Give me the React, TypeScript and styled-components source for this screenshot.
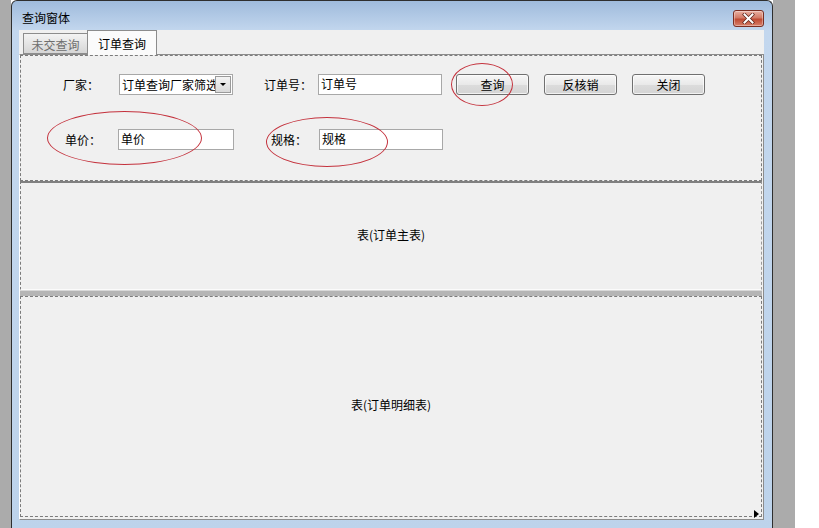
import React from "react";
import styled, { createGlobalStyle } from "styled-components";

// --- Global ---
const GlobalStyle = createGlobalStyle`
  html, body {
    margin: 0;
    padding: 0;
    background: #fff;
  }
  body {
    font-family: "Noto Sans CJK SC", "Liberation Sans", sans-serif;
    font-size: 12px;
    color: #000;
  }
  * {
    box-sizing: border-box;
  }
`;

// --- Desktop / window frame ---
const Desktop = styled.div`
  display: flex;
  width: 819px;
  height: 528px;
  overflow: hidden;
  background: #fff;
`;

const GrayStrip = styled.div<{ $w: number }>`
  width: ${(p) => p.$w}px;
  flex-shrink: 0;
  background: #ababab;
`;

const Window = styled.div`
  width: 762px;
  height: 540px;
  flex-shrink: 0;
  display: flex;
  flex-direction: column;
  border: 1px solid #2e2e2e;
  border-bottom: none;
  border-radius: 6px 6px 0 0;
  background: linear-gradient(#9fbbdc, #c3d7ee 30px, #bdd3eb);
  overflow: hidden;
`;

const TitleBar = styled.div`
  height: 29px;
  padding: 5px 8px 0 10px;
  display: flex;
  align-items: center;
  justify-content: space-between;
  flex-shrink: 0;
`;

const TitleText = styled.span`
  font-size: 12px;
  color: #000;
  line-height: 24px;
`;

const CloseButton = styled.div`
  width: 31px;
  height: 17px;
  border: 1px solid #7a2e22;
  border-radius: 3px;
  background: linear-gradient(#eab1a3, #d27a66 45%, #bf4a33 55%, #d8806a);
  display: flex;
  align-items: center;
  justify-content: center;
  box-shadow: inset 0 0 0 1px rgba(255, 255, 255, 0.35);
`;

const FrameBody = styled.div`
  flex: 1;
  padding: 0 8px 0 7px;
`;

const Client = styled.div`
  height: 490px;
  background: #f0f0f0;
  display: flex;
  flex-direction: column;
`;

// --- Tabs ---
const TabStrip = styled.div`
  height: 24px;
  padding-left: 4px;
  display: flex;
  align-items: flex-end;
  flex-shrink: 0;
`;

const Tab = styled.div<{ $active?: boolean }>`
  height: ${(p) => (p.$active ? 25 : 21)}px;
  width: ${(p) => (p.$active ? 70 : 64)}px;
  margin-bottom: ${(p) => (p.$active ? -1 : 0)}px;
  border: 1px solid #8c8c8c;
  border-bottom: ${(p) => (p.$active ? "none" : "1px solid #8c8c8c")};
  border-right: ${(p) => (p.$active ? "1px solid #8c8c8c" : "none")};
  background: ${(p) =>
    p.$active ? "#fbfbfb" : "linear-gradient(#f3f3f3, #d6d6d6)"};
  color: ${(p) => (p.$active ? "#000" : "#6e6e6e")};
  font-size: 12px;
  display: flex;
  align-items: center;
  justify-content: center;
  padding-top: ${(p) => (p.$active ? 0 : 2)}px;
  position: relative;
  z-index: 1;
`;

const TabPage = styled.div`
  flex: 1;
  display: flex;
  flex-direction: column;
  border-top: 1px solid #8c8c8c;
  border-right: 1px solid #8c8c8c;
  border-bottom: 1px solid #8c8c8c;
  border-left: 1px solid #fff;
  padding: 0 1px 2px 0;
  background: #f0f0f0;
`;

// --- Filter panel ---
const FilterPanel = styled.div`
  height: 126px;
  flex-shrink: 0;
  border: 1px dashed #7b7b7b;
  position: relative;
  padding-top: 17px;
`;

const Row = styled.div<{ $pl: number; $mt?: number }>`
  display: flex;
  align-items: center;
  height: 22px;
  padding-left: ${(p) => p.$pl}px;
  margin-top: ${(p) => p.$mt ?? 0}px;
`;

const Label = styled.span<{ $w: number; $ml?: number }>`
  width: ${(p) => p.$w}px;
  margin-left: ${(p) => p.$ml ?? 0}px;
  flex-shrink: 0;
  font-size: 12px;
  white-space: nowrap;
`;

const TextBox = styled.div<{ $w: number }>`
  width: ${(p) => p.$w}px;
  height: 21px;
  flex-shrink: 0;
  background: #fff;
  border: 1px solid #a8a8a8;
  padding: 0 2px;
  font-size: 12px;
  line-height: 18px;
  white-space: nowrap;
  overflow: hidden;
`;

const Combo = styled.div`
  width: 114px;
  height: 21px;
  flex-shrink: 0;
  display: flex;
  align-items: center;
  background: #fff;
  border: 1px solid #a8a8a8;
  padding: 1px;
`;

// the reference clips the last character behind the arrow button
const ComboText = styled.span`
  flex: 1;
  overflow: hidden;
  white-space: nowrap;
  font-size: 12px;
  line-height: 17px;
  padding-left: 1px;
`;

const ComboArrow = styled.div`
  width: 16px;
  height: 17px;
  flex-shrink: 0;
  border: 1px solid #9a9a9a;
  background: linear-gradient(#f4f4f4, #d9d9d9);
  display: flex;
  align-items: center;
  justify-content: center;

  &::after {
    content: "";
    border-left: 3px solid transparent;
    border-right: 3px solid transparent;
    border-top: 3px solid #000;
    margin-top: 1px;
  }
`;

const Button = styled.div<{ $ml: number }>`
  width: 73px;
  height: 21px;
  margin-left: ${(p) => p.$ml}px;
  flex-shrink: 0;
  border: 1px solid #707070;
  border-radius: 3px;
  background: linear-gradient(#f7f7f7, #e9e9e9 50%, #dcdcdc 51%, #d4d4d4);
  box-shadow: inset 0 0 0 1px rgba(255, 255, 255, 0.7);
  display: flex;
  align-items: center;
  justify-content: center;
  font-size: 12px;
`;

const Ellipse = styled.div<{ $x: number; $y: number; $w: number; $h: number }>`
  position: absolute;
  left: ${(p) => p.$x}px;
  top: ${(p) => p.$y}px;
  width: ${(p) => p.$w}px;
  height: ${(p) => p.$h}px;
  border: 1px solid #c4323d;
  border-radius: 50%;
  pointer-events: none;
`;

// --- Grid panels ---
const MasterPanel = styled.div`
  height: 109px;
  flex-shrink: 0;
  border-top: 2px solid #808080;
  border-left: 1px dashed #7b7b7b;
  border-right: 1px dashed #9a9a9a;
  border-bottom: 1px solid #fbfbfb;
  display: flex;
  align-items: center;
  justify-content: center;
  padding-bottom: 4px;
  font-size: 12px;
`;

const Splitter = styled.div`
  height: 6px;
  flex-shrink: 0;
  background: #b5b5b5;
  border-top: 1px solid #d9d9d9;
`;

const DetailPanel = styled.div`
  flex: 1;
  position: relative;
  border: 1px dashed #7b7b7b;
  display: flex;
  align-items: center;
  justify-content: center;
  padding-bottom: 4px;
  font-size: 12px;
`;

const ScrollArrow = styled.div`
  position: absolute;
  right: 2px;
  bottom: -2px;
  border-left: 5px solid #000;
  border-top: 4px solid transparent;
  border-bottom: 4px solid transparent;
`;

function App() {
  return (
    <>
      <GlobalStyle />
      <Desktop>
        <GrayStrip $w={11} />
        <Window>
          <TitleBar>
            <TitleText>查询窗体</TitleText>
            <CloseButton>
              <svg width="13" height="11" viewBox="0 0 13 11">
                <path
                  d="M2.5 1.5 L10.5 9.5 M10.5 1.5 L2.5 9.5"
                  stroke="#5a2219"
                  strokeWidth="3.4"
                  strokeLinecap="square"
                />
                <path
                  d="M2.5 1.5 L10.5 9.5 M10.5 1.5 L2.5 9.5"
                  stroke="#fff"
                  strokeWidth="2"
                  strokeLinecap="square"
                />
              </svg>
            </CloseButton>
          </TitleBar>
          <FrameBody>
            <Client>
              <TabStrip>
                <Tab>未交查询</Tab>
                <Tab $active>订单查询</Tab>
              </TabStrip>
              <TabPage>
                <FilterPanel>
                  <Row $pl={42}>
                    <Label $w={56}>厂家：</Label>
                    <Combo>
                      <ComboText>订单查询厂家筛选</ComboText>
                      <ComboArrow />
                    </Combo>
                    <Label $w={54} $ml={31}>
                      订单号：
                    </Label>
                    <TextBox $w={124}>订单号</TextBox>
                    <Button $ml={14}>查询</Button>
                    <Button $ml={15}>反核销</Button>
                    <Button $ml={15}>关闭</Button>
                  </Row>
                  <Row $pl={44} $mt={33}>
                    <Label $w={53}>单价：</Label>
                    <TextBox $w={116}>单价</TextBox>
                    <Label $w={48} $ml={37}>
                      规格：
                    </Label>
                    <TextBox $w={124}>规格</TextBox>
                  </Row>
                  <Ellipse $x={430} $y={7} $w={62} $h={43} />
                  <Ellipse $x={26} $y={55} $w={155} $h={54} />
                  <Ellipse $x={245} $y={61} $w={122} $h={50} />
                </FilterPanel>
                <MasterPanel>表(订单主表)</MasterPanel>
                <Splitter />
                <DetailPanel>
                  表(订单明细表)
                  <ScrollArrow />
                </DetailPanel>
              </TabPage>
            </Client>
          </FrameBody>
        </Window>
        <GrayStrip $w={22} />
      </Desktop>
    </>
  );
}

export default App;
